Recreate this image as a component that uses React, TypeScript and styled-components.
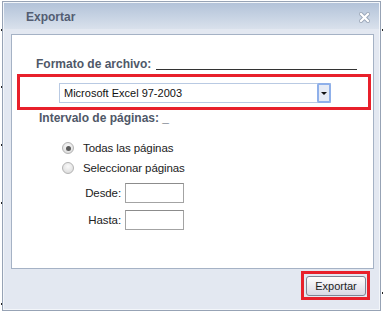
import styled, { createGlobalStyle } from "styled-components";

const GlobalStyle = createGlobalStyle`
  html, body {
    margin: 0;
    padding: 0;
    background: #fff;
  }
  body {
    font-family: "Liberation Sans", Arial, sans-serif;
    font-size: 11px;
    color: #222;
  }
`;

const StyledPage = styled.div`
  position: relative;
  width: 384px;
  height: 313px;
  padding: 1px 0 0 2px;
  box-sizing: border-box;
`;

const StyledDialog = styled.div`
  width: 379px;
  height: 310px;
  box-sizing: border-box;
  border: 1px solid #97a3b5;
  background: #e3e8f1;
`;

const StyledFrame = styled.div`
  height: 100%;
  box-sizing: border-box;
  border: 1px solid #f3f6fa;
  display: flex;
  flex-direction: column;
`;

const StyledTitleBar = styled.div`
  height: 26px;
  display: flex;
  align-items: center;
  justify-content: space-between;
  padding: 2px 9px 0 22px;
  box-sizing: border-box;
  background: linear-gradient(#b3c3d9, #d9e1ec);
`;

const StyledTitle = styled.span`
  font-weight: bold;
  font-size: 12px;
  color: #535d72;
`;

const StyledClose = styled.svg`
  display: block;
`;

const StyledPanel = styled.div`
  margin: 5px 5px 0 7px;
  height: 235px;
  box-sizing: border-box;
  border: 1px solid #a5b2c5;
  background: #fff;
  padding: 22px 2px 0 5px;
`;

const StyledFieldRow = styled.div`
  display: flex;
  align-items: flex-end;
  padding: 0 14px 0 19px;
  height: 14px;
`;

const StyledLabel = styled.span`
  font-weight: bold;
  font-size: 12px;
  color: #4f5868;
  white-space: nowrap;
`;

const StyledRule = styled.span`
  flex: 1;
  margin: 0 0 1px 5px;
  border-bottom: 1px solid #333;
`;

const StyledHighlight = styled.div<{ $pad: string }>`
  border: 3px solid #e8202b;
  padding: ${(p) => p.$pad};
  display: flex;
`;

const StyledHighlightRow = styled.div`
  margin-top: 3px;
`;

const StyledSelect = styled.div`
  width: 272px;
  height: 20px;
  box-sizing: border-box;
  border: 1px solid #b9cae3;
  display: flex;
  align-items: center;
  justify-content: space-between;
  padding-left: 4px;
  font-size: 11px;
  color: #111;
`;

const StyledDropButton = styled.div`
  width: 14px;
  height: 20px;
  margin-right: -1px;
  box-sizing: border-box;
  border: 2px solid #8fb0ea;
  border-radius: 2px;
  background: #e6ebf5;
  display: flex;
  align-items: center;
  justify-content: center;

  &::after {
    content: "";
    border-left: 3px solid transparent;
    border-right: 3px solid transparent;
    border-top: 3px solid #111;
  }
`;

const StyledSection = styled.div`
  margin: 1px 0 0 22px;
`;

const StyledRadioList = styled.div`
  display: flex;
  flex-direction: column;
  gap: 8px;
  margin: 17px 0 0 45px;
`;

const StyledRadioRow = styled.label`
  display: flex;
  align-items: center;
  gap: 9px;
  height: 12px;
  color: #222;
  font-size: 11.5px;
  letter-spacing: -0.1px;
`;

const StyledRadio = styled.span<{ $checked?: boolean }>`
  width: 12px;
  height: 12px;
  box-sizing: border-box;
  border-radius: 50%;
  border: 1px solid #b3b3b3;
  background: radial-gradient(circle at 50% 35%, #fafafa, #d6d6d6);
  display: flex;
  align-items: center;
  justify-content: center;

  &::after {
    content: "";
    display: ${(p) => (p.$checked ? "block" : "none")};
    width: 5px;
    height: 5px;
    border-radius: 50%;
    background: #5a5a5a;
  }
`;

const StyledRangeGrid = styled.div`
  display: grid;
  grid-template-columns: 37px 59px;
  column-gap: 4px;
  row-gap: 7px;
  align-items: center;
  margin: 9px 0 0 67px;
`;

const StyledRangeLabel = styled.span`
  text-align: right;
  font-size: 11.5px;
  letter-spacing: -0.1px;
  color: #222;
`;

const StyledInput = styled.input`
  width: 59px;
  height: 20px;
  box-sizing: border-box;
  border: 1px solid #a3a3a3;
  border-top-color: #8c8c8c;
  margin: 0;
  padding: 0 2px;
  background: #fff;
`;

const StyledFooter = styled.div`
  display: flex;
  justify-content: flex-end;
  padding: 2px 9px 0 0;
`;

const StyledButton = styled.button`
  width: 60px;
  height: 20px;
  box-sizing: border-box;
  border: 1px solid #7f8494;
  border-radius: 3px;
  background: linear-gradient(#fefefe, #e9e9f0 55%, #d9d8e4);
  font-family: "Liberation Sans", Arial, sans-serif;
  font-size: 11px;
  color: #1c1c1c;
  padding: 0;
`;

const StyledHandle = styled.span<{ $x: number; $y: number }>`
  position: absolute;
  left: ${(p) => p.$x}px;
  top: ${(p) => p.$y}px;
  width: 1px;
  height: 2px;
  background: #222;
`;

const handles = [
  [1, 29],
  [1, 86],
  [1, 144],
  [1, 202],
  [1, 303],
  [382, 29],
  [382, 292],
];

export default function App() {
  return (
    <>
      <GlobalStyle />
      <StyledPage>
        <StyledDialog>
          <StyledFrame>
            <StyledTitleBar>
              <StyledTitle>Exportar</StyledTitle>
              <StyledClose width="11" height="11" viewBox="0 0 11 11">
                <path d="M2 2 L9 9 M9 2 L2 9" stroke="#9aa6b8" strokeWidth="4" strokeLinecap="square" />
                <path d="M2 2 L9 9 M9 2 L2 9" stroke="#fff" strokeWidth="2.2" strokeLinecap="square" />
              </StyledClose>
            </StyledTitleBar>
            <StyledPanel>
              <StyledFieldRow>
                <StyledLabel>Formato de archivo:</StyledLabel>
                <StyledRule />
              </StyledFieldRow>
              <StyledHighlightRow>
                <StyledHighlight $pad="6px 0 4px 39px">
                  <StyledSelect>
                    Microsoft Excel 97-2003
                    <StyledDropButton />
                  </StyledSelect>
                </StyledHighlight>
              </StyledHighlightRow>
              <StyledSection>
                <StyledLabel>Intervalo de páginas: _</StyledLabel>
              </StyledSection>
              <StyledRadioList>
                <StyledRadioRow>
                  <StyledRadio $checked />
                  Todas las páginas
                </StyledRadioRow>
                <StyledRadioRow>
                  <StyledRadio />
                  Seleccionar páginas
                </StyledRadioRow>
              </StyledRadioList>
              <StyledRangeGrid>
                <StyledRangeLabel>Desde:</StyledRangeLabel>
                <StyledInput />
                <StyledRangeLabel>Hasta:</StyledRangeLabel>
                <StyledInput />
              </StyledRangeGrid>
            </StyledPanel>
            <StyledFooter>
              <StyledHighlight $pad="2px 1px 1px 2px">
                <StyledButton>Exportar</StyledButton>
              </StyledHighlight>
            </StyledFooter>
          </StyledFrame>
        </StyledDialog>
        {handles.map(([x, y], i) => (
          <StyledHandle key={`handle-${i}`} $x={x} $y={y} />
        ))}
      </StyledPage>
    </>
  );
}
